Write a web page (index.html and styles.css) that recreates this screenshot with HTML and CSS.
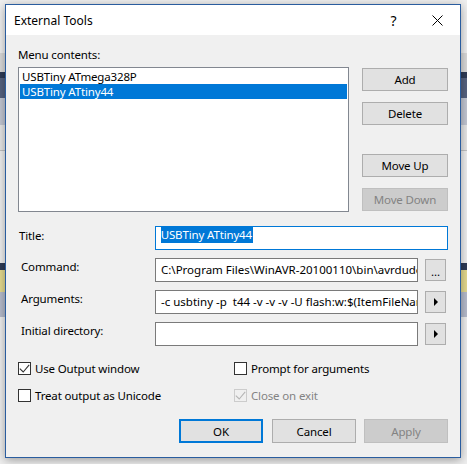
FILE: index.html
```html
<!DOCTYPE html>
<html lang="en">
<head>
<meta charset="utf-8">
<title>External Tools</title>
<link rel="stylesheet" href="styles.css">
</head>
<body>
<div class="window">
  <div class="titlebar">
    <span class="title">External Tools</span>
    <span class="cap-btn help">?</span>
    <span class="cap-btn close">
      <svg width="11" height="11" viewBox="0 0 11 11"><path d="M0.5 0.5 L10.5 10.5 M10.5 0.5 L0.5 10.5" stroke="#000" stroke-width="1" fill="none"/></svg>
    </span>
  </div>
  <div class="content">
    <div class="menu-label">Menu contents:</div>
    <div class="list-row">
      <div class="listbox">
        <div class="item">USBTiny ATmega328P</div>
        <div class="item selected">USBTiny ATtiny44</div>
      </div>
      <div class="btn-col">
        <div class="btn">Add</div>
        <div class="btn gap-s">Delete</div>
        <div class="btn gap-l">Move Up</div>
        <div class="btn gap-s disabled">Move Down</div>
      </div>
    </div>

    <div class="form">
      <div class="row">
        <div class="label label-title">Title:</div>
        <div class="textbox wide focused title-box"><span class="sel">USBTiny ATtiny44</span></div>
      </div>
      <div class="row">
        <div class="label">Command:</div>
        <div class="textbox">C:\Program Files\WinAVR-20100110\bin\avrdude.exe</div>
        <div class="small-btn dots">...</div>
      </div>
      <div class="row">
        <div class="label">Arguments:</div>
        <div class="textbox">-c usbtiny -p  t44 -v -v -v -U flash:w:$(ItemFileName).hex</div>
        <div class="small-btn"><span class="tri"></span></div>
      </div>
      <div class="row">
        <div class="label">Initial directory:</div>
        <div class="textbox"></div>
        <div class="small-btn"><span class="tri"></span></div>
      </div>
    </div>

    <div class="checks">
      <div class="check">
        <span class="box"><svg width="13" height="13" viewBox="0 0 13 13"><path d="M1.8 6.6 L5.2 10 L11.2 2.8" stroke="#333" stroke-width="1.1" fill="none"/></svg></span>
        <span>Use Output window</span>
      </div>
      <div class="check">
        <span class="box"></span>
        <span>Prompt for arguments</span>
      </div>
      <div class="check">
        <span class="box"></span>
        <span>Treat output as Unicode</span>
      </div>
      <div class="check disabled">
        <span class="box"><svg width="13" height="13" viewBox="0 0 13 13"><path d="M1.8 6.6 L5.2 10 L11.2 2.8" stroke="#b5b5b5" stroke-width="1.1" fill="none"/></svg></span>
        <span>Close on exit</span>
      </div>
    </div>

    <div class="footer">
      <div class="btn fbtn default">OK</div>
      <div class="btn fbtn cancel">Cancel</div>
      <div class="btn fbtn disabled">Apply</div>
    </div>
  </div>
</div>
</body>
</html>
```
FILE: styles.css
```css
html, body {
  margin: 0;
  padding: 0;
}
body {
  width: 467px;
  height: 464px;
  overflow: hidden;
  font-family: "Noto Sans", "Open Sans", sans-serif;
  font-size: 11.5px;
  letter-spacing: -0.15px;
  color: #000;
  background: linear-gradient(to bottom,
    #efefef 0 53px,
    #d9d9d9 53px 72px,
    #2e3b56 72px 78px,
    #56627f 78px 98px,
    #c2c6d2 98px 125px,
    #e6e6e6 125px 150px,
    #c2c2c2 150px 151px,
    #efefef 151px 263px,
    #2e3b56 263px 270px,
    #e4d98e 270px 292px,
    #b6bbcb 292px 317px,
    #eeeeee 317px 464px);
  padding-top: 4px;
  box-sizing: border-box;
}
.window {
  margin-left: 5px;
  width: 456px;
  height: 454px;
  box-sizing: border-box;
  border: 1px solid #2a5d9f;
  background: #f0f0f0;
  box-shadow: 0 2px 9px rgba(0, 0, 0, 0.35);
}
.titlebar {
  height: 30px;
  background: #fff;
  display: flex;
  align-items: center;
}
.title {
  padding-left: 8px;
  flex: 1;
  font-size: 12px;
  letter-spacing: 0;
}
.cap-btn {
  width: 46px;
  height: 30px;
  display: flex;
  align-items: center;
  justify-content: center;
}
.help {
  font-size: 14px;
  letter-spacing: 0;
  padding-left: 5px;
  box-sizing: border-box;
}
.close svg {
  display: block;
}
.content {
  padding: 12px 12px 0 12px;
}
.menu-label {
  height: 15px;
  line-height: 15px;
  margin-bottom: 5px;
}
.list-row {
  display: flex;
  gap: 13px;
  height: 145px;
}
.listbox {
  width: 331px;
  height: 145px;
  box-sizing: border-box;
  border: 1px solid #828790;
  background: #fff;
  padding: 1px;
}
.item {
  height: 15px;
  line-height: 15px;
  padding-left: 2px;
  white-space: nowrap;
  overflow: hidden;
}
.item.selected {
  background: #0078d7;
  color: #fff;
}
.btn-col {
  display: flex;
  flex-direction: column;
  width: 86px;
  padding-top: 1px;
}
.btn {
  height: 23px;
  box-sizing: border-box;
  border: 1px solid #adadad;
  background: #e1e1e1;
  display: flex;
  align-items: center;
  justify-content: center;
  white-space: nowrap;
}
.btn.gap-s {
  margin-top: 11px;
}
.btn.gap-l {
  margin-top: 29px;
}
.btn.disabled {
  background: #cccccc;
  border-color: #bfbfbf;
  color: #838383;
}
.form {
  margin-top: 14px;
  display: flex;
  flex-direction: column;
  gap: 8px;
}
.row {
  display: flex;
  align-items: flex-start;
  height: 24px;
}
.label {
  width: 137px;
  padding-left: 3px;
  padding-top: 1px;
  box-sizing: border-box;
  line-height: 15px;
  white-space: nowrap;
}
.label.label-title {
  padding-left: 1px;
  padding-top: 2px;
}
.textbox {
  width: 263px;
  height: 24px;
  box-sizing: border-box;
  border: 1px solid #7a7a7a;
  background: #fff;
  padding-left: 5px;
  line-height: 22px;
  letter-spacing: 0;
  white-space: pre;
  overflow: hidden;
}
.textbox.wide {
  width: 294px;
}
.textbox.focused {
  border-color: #0078d7;
}
.title-box {
  line-height: 16px;
  padding-top: 0;
  letter-spacing: -0.15px;
}
.sel {
  display: inline-block;
  background: #0078d7;
  color: #fff;
  line-height: 16px;
  padding-right: 1px;
}
.small-btn {
  width: 21px;
  height: 22px;
  margin-left: 7px;
  margin-top: 1px;
  box-sizing: border-box;
  border: 1px solid #adadad;
  background: #e1e1e1;
  display: flex;
  align-items: center;
  justify-content: center;
}
.dots {
  line-height: 12px;
  padding-top: 3px;
  letter-spacing: 0;
}
.tri {
  width: 0;
  height: 0;
  border-top: 4px solid transparent;
  border-bottom: 4px solid transparent;
  border-left: 4px solid #000;
  margin-left: 1px;
}
.checks {
  margin-top: 16px;
  display: grid;
  grid-template-columns: 216px 1fr;
  row-gap: 14px;
}
.check {
  display: flex;
  align-items: center;
  height: 13px;
  gap: 4px;
  white-space: nowrap;
}
.box {
  width: 13px;
  height: 13px;
  box-sizing: border-box;
  border: 1px solid #333;
  background: #fff;
  position: relative;
  flex: none;
}
.box svg {
  position: absolute;
  left: -1px;
  top: -1px;
}
.check.disabled {
  color: #838383;
}
.check.disabled .box {
  border-color: #cccccc;
  background: #f0f0f0;
}
.footer {
  margin-top: 17px;
  display: flex;
  gap: 8px;
  padding-left: 161px;
}
.fbtn {
  width: 86px;
  height: 24px;
}
.fbtn.default {
  border: 2px solid #0078d7;
}
.fbtn.cancel {
  margin-left: 1px;
}
```
